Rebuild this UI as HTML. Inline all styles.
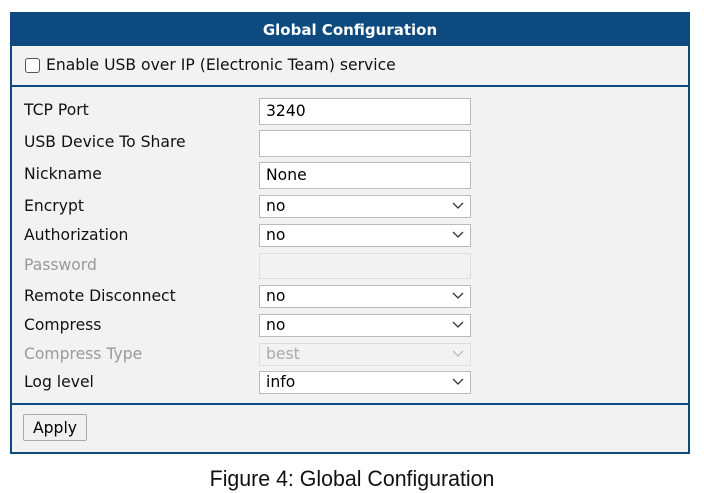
<!DOCTYPE html>
<html><head><style>
body{margin:0;width:704px;height:493px;background:#fff;font-family:"DejaVu Sans","Liberation Sans",sans-serif;position:relative;overflow:hidden}
.box{position:absolute;left:10px;top:12px;width:676px;height:438px;border:2px solid #0d4a7f;background:#f2f2f2}
.hdr{position:absolute;left:0;top:0;width:676px;height:32px;background:#0d4a7f;color:#fff;font-weight:bold;font-size:15px;text-align:center;line-height:32px}
.sep{position:absolute;left:0;width:676px;height:2px;background:#0d4a7f}
.lbl{position:absolute;left:12px;font-size:15.6px;color:#111}
.dis{color:#999}
.in{position:absolute;left:247px;background:#fff;border:1px solid #bbb;font-size:15.6px;padding-left:6px;box-sizing:border-box;width:212px}
.in.d{background:#f2f2f2;border-color:#ddd;color:#aaa}
.chev{position:absolute;right:6px;top:50%;margin-top:-5px}
.btn{position:absolute;left:11px;top:400px;width:64px;height:27px;border:1px solid #aaa;background:#f0f0f0;font-size:15.6px;text-align:center;line-height:27px;box-sizing:border-box;border-radius:2px}
.cap{position:absolute;left:0;width:704px;top:466px;text-align:center;font-family:"Liberation Sans",sans-serif;font-size:22px;color:#111;transform:scaleX(.97)}
</style></head><body>
<div class="box">
<div class="hdr">Global Configuration</div>
<div style="position:absolute;left:13px;top:44px;width:13px;height:13px;border:1px solid #555;border-radius:3px;background:#fff"></div>
<div class="lbl" style="left:34px;top:42px">Enable USB over IP (Electronic Team) service</div>
<div class="sep" style="top:71px"></div>
<div class="lbl" style="top:87px">TCP Port</div>
<div class="in" style="top:84px;height:27px;line-height:25px">3240</div>
<div class="lbl" style="top:119px">USB Device To Share</div>
<div class="in" style="top:116px;height:27px"></div>
<div class="lbl" style="top:151px">Nickname</div>
<div class="in" style="top:148px;height:27px;line-height:25px">None</div>
<div class="lbl" style="top:183px">Encrypt</div>
<div class="in" style="top:181px;height:23px;line-height:21px">no<svg class="chev" width="12" height="8"><path d="M1 1l5 5 5-5" stroke="#333" fill="none" stroke-width="1.3"/></svg></div>
<div class="lbl" style="top:212px">Authorization</div>
<div class="in" style="top:210px;height:23px;line-height:21px">no<svg class="chev" width="12" height="8"><path d="M1 1l5 5 5-5" stroke="#333" fill="none" stroke-width="1.3"/></svg></div>
<div class="lbl dis" style="top:242px">Password</div>
<div class="in d" style="top:239px;height:26px"></div>
<div class="lbl" style="top:273px">Remote Disconnect</div>
<div class="in" style="top:271px;height:23px;line-height:21px">no<svg class="chev" width="12" height="8"><path d="M1 1l5 5 5-5" stroke="#333" fill="none" stroke-width="1.3"/></svg></div>
<div class="lbl" style="top:302px">Compress</div>
<div class="in" style="top:300px;height:23px;line-height:21px">no<svg class="chev" width="12" height="8"><path d="M1 1l5 5 5-5" stroke="#333" fill="none" stroke-width="1.3"/></svg></div>
<div class="lbl dis" style="top:331px">Compress Type</div>
<div class="in d" style="top:329px;height:23px;line-height:21px">best<svg class="chev" width="12" height="8"><path d="M1 1l5 5 5-5" stroke="#bbb" fill="none" stroke-width="1.3"/></svg></div>
<div class="lbl" style="top:359px">Log level</div>
<div class="in" style="top:357px;height:23px;line-height:21px">info<svg class="chev" width="12" height="8"><path d="M1 1l5 5 5-5" stroke="#333" fill="none" stroke-width="1.3"/></svg></div>
<div class="sep" style="top:389px"></div>
<div class="btn">Apply</div>
</div>
<div class="cap">Figure 4: Global Configuration</div>
</body></html>
